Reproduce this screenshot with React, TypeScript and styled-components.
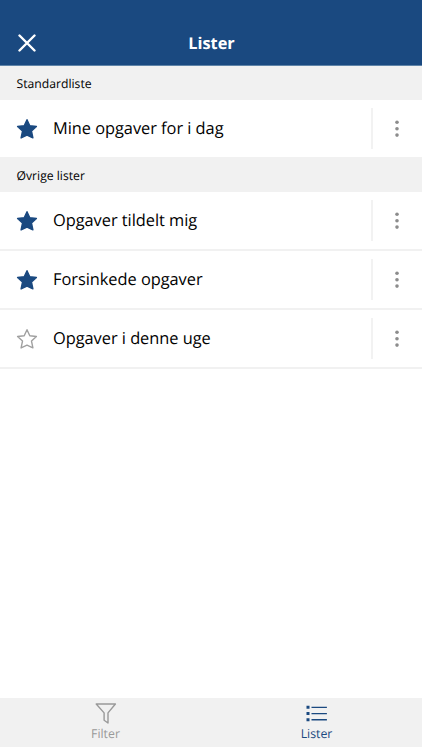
import React from 'react';
import styled, { createGlobalStyle } from 'styled-components';

const GlobalStyle = createGlobalStyle`
  * { box-sizing: border-box; }
  body {
    margin: 0;
    background: #fff;
    font-family: "Open Sans", "Noto Sans", sans-serif;
    text-rendering: geometricPrecision;
  }
  button { font: inherit; text-rendering: inherit; border: 0; padding: 0; background: none; }
  svg { display: block; }
`;

const Screen = styled.div`
  display: flex;
  flex-direction: column;
  height: 750px;
  padding-bottom: 3px;
  background: #fff;
  color: #000;
`;

const Header = styled.header`
  display: grid;
  grid-template-columns: 53px 1fr 53px;
  align-items: center;
  height: 66px;
  padding-top: 21px;
  flex: none;
  background: #1a4980;
  border-bottom: 1px solid #5f84a8;
  color: #fff;
`;

const CloseButton = styled.button`
  display: flex;
  justify-content: center;
  color: #fff;
`;

const Title = styled.h1`
  margin: 0;
  padding-left: 1px;
  text-align: center;
  font-size: 16.3px;
  line-height: 24px;
  font-weight: 700;
`;

const SectionTitle = styled.h2<{ $height: number }>`
  display: flex;
  align-items: center;
  height: ${(p) => p.$height}px;
  margin: 0;
  padding: 1px 16.5px 0;
  background: #f1f1f1;
  font-size: 12.2px;
  line-height: 17px;
  font-weight: 400;
`;

const Row = styled.div<{ $divided?: boolean }>`
  display: grid;
  grid-template-columns: 53px 1fr 51px;
  align-items: center;
  height: ${(p) => (p.$divided ? 59 : 57)}px;
  border-bottom: ${(p) => (p.$divided ? '2px solid #f1f1f1' : '0')};
`;

const StarSlot = styled.div`
  display: flex;
  justify-content: center;
`;

const Label = styled.span`
  padding-bottom: 1px;
  font-size: 16.4px;
  letter-spacing: -0.04px;
  line-height: 24px;
  white-space: nowrap;
`;

const MenuButton = styled.button`
  display: flex;
  align-items: center;
  justify-content: center;
  height: 41px;
  padding-right: 2px;
  border-left: 2px solid #f2f2f2;
`;

const TabBar = styled.nav`
  display: grid;
  grid-template-columns: 1fr 1fr;
  height: 49px;
  margin-top: auto;
  background: #f1f1f1;
`;

const Tab = styled.button<{ $active?: boolean }>`
  display: flex;
  flex-direction: column;
  align-items: center;
  padding-top: 4px;
  color: ${(p) => (p.$active ? '#1a4980' : '#999')};
`;

const TabLabel = styled.span`
  font-size: 12.3px;
  line-height: 17px;
`;

const Star = ({ filled }: { filled: boolean }) => (
  <svg width="22" height="22" viewBox="0 0 22 22">
    <path
      d="M11 1.7L13.8 7.8L20.4 8.5L15.5 13.1L16.9 19.9L11 17.2L5.1 19.9L6.5 13.1L1.6 8.5L8.2 7.8Z"
      fill={filled ? '#1a4980' : 'none'}
      stroke={filled ? '#1a4980' : '#a0a0a0'}
      strokeWidth="1.4"
      strokeLinejoin="round"
    />
  </svg>
);

const Dots = () => (
  <svg width="6" height="18" viewBox="0 0 6 18" fill="#8c8c8c">
    <circle cx="3" cy="2.3" r="1.8" />
    <circle cx="3" cy="8.7" r="1.8" />
    <circle cx="3" cy="15.1" r="1.8" />
  </svg>
);

type Item = { name: string; starred: boolean; divided?: boolean };

const standard: Item[] = [{ name: 'Mine opgaver for i dag', starred: true }];

const others: Item[] = [
  { name: 'Opgaver tildelt mig', starred: true, divided: true },
  { name: 'Forsinkede opgaver', starred: true, divided: true },
  { name: 'Opgaver i denne uge', starred: false, divided: true },
];

const ListRow = ({ item }: { item: Item }) => (
  <Row $divided={item.divided}>
    <StarSlot><Star filled={item.starred} /></StarSlot>
    <Label>{item.name}</Label>
    <MenuButton aria-label="Flere valg"><Dots /></MenuButton>
  </Row>
);

export default function App() {
  return (
    <Screen>
      <GlobalStyle />
      <Header>
        <CloseButton aria-label="Luk">
          <svg width="18" height="18" viewBox="0 0 18 18" stroke="currentColor" strokeWidth="2.4" strokeLinecap="round">
            <path d="M1.5 1.5L16.5 16.5M16.5 1.5L1.5 16.5" />
          </svg>
        </CloseButton>
        <Title>Lister</Title>
      </Header>
      <SectionTitle $height={34}>Standardliste</SectionTitle>
      {standard.map((item) => <ListRow key={item.name} item={item} />)}
      <SectionTitle $height={35}>Øvrige lister</SectionTitle>
      {others.map((item) => <ListRow key={item.name} item={item} />)}
      <TabBar>
        <Tab>
          <svg width="22" height="23" viewBox="0 0 22 23" fill="none" stroke="currentColor" strokeWidth="1.4" strokeLinejoin="round">
            <path d="M1.2 2H20.4L13 10.9V21L9.1 18.2V10.9Z" />
          </svg>
          <TabLabel>Filter</TabLabel>
        </Tab>
        <Tab $active>
          <svg width="22" height="23" viewBox="0 0 22 23" fill="currentColor">
            <path d="M.5 3.8h3v3h-3zM.5 10h3v3h-3zM.5 16.2h3v3h-3zM5.5 4.7h15.4v1.3H5.5zM5.5 10.9h15.4v1.3H5.5zM5.5 17.1h15.4v1.3H5.5z" />
          </svg>
          <TabLabel>Lister</TabLabel>
        </Tab>
      </TabBar>
    </Screen>
  );
}
